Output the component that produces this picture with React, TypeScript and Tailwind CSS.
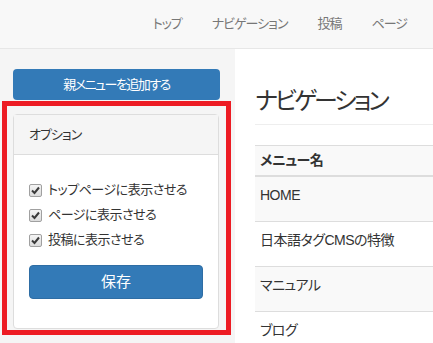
import React from 'react'

const navItems = ['トップ', 'ナビゲーション', '投稿', 'ページ']

const options = ['トップページに表示させる', 'ページに表示させる', '投稿に表示させる']

const menus = ['HOME', '日本語タグCMSの特徴', 'マニュアル', 'ブログ']

function Check() {
  return (
    <span className="flex h-[13px] w-[13px] shrink-0 items-center justify-center rounded-[2px] border border-[#a0a0a0] bg-gradient-to-b from-[#f4f4f4] to-[#dcdcdc]">
      <svg width="9" height="9" viewBox="0 0 9 9">
        <path d="M1 4.5 L3.5 7 L8 1.5" fill="none" stroke="#3a3a3a" strokeWidth="2" />
      </svg>
    </span>
  )
}

export default function App() {
  return (
    <div className="relative h-[343px] w-[433px] overflow-hidden bg-white font-['Liberation_Sans','Noto_Sans_CJK_JP',sans-serif] text-[#333] [font-feature-settings:'palt']">
      {/* top navbar */}
      <nav className="flex h-[49px] items-center justify-end border-b border-[#e7e7e7] bg-[#f8f8f8] pr-[11px] text-[13px] tracking-[-1px] text-[#777]">
        {navItems.map((item) => (
          <a key={item} className="px-[15px]">
            {item}
          </a>
        ))}
      </nav>

      <div className="flex h-[294px]">
        {/* sidebar */}
        <aside className="w-[235px] shrink-0 bg-[#f5f5f5] pl-[13px] pr-[15px] pt-[20px]">
          <button className="h-[31px] w-full rounded-[4px] bg-[#337ab7] text-[13px] tracking-[-1.5px] text-white">
            親メニューを追加する
          </button>

          <div className="mt-[14px] w-[206px] rounded-[4px] border border-[#ddd] bg-white">
            <div className="flex h-[40px] items-center border-b border-[#ddd] bg-[#f5f5f5] px-[15px] text-[13px] tracking-[-1px] text-[#333]">
              オプション
            </div>
            <div className="px-[15px] pb-[29px] pt-[27px]">
              <div className="flex flex-col gap-[9px]">
                {options.map((opt) => (
                  <label key={opt} className="flex h-[16px] items-center gap-[6px] whitespace-nowrap text-[13px] tracking-[-0.5px]">
                    <Check />
                    {opt}
                  </label>
                ))}
              </div>
              <button className="mt-[17px] h-[34px] w-full rounded-[4px] border border-[#2e6da4] bg-[#337ab7] text-[15px] text-white">
                保存
              </button>
            </div>
          </div>
        </aside>

        {/* main */}
        <main className="flex-1 pl-[20px]">
          <h1 className="mt-[34px] text-[24px] leading-[36px] tracking-[-3px] text-[#333]">ナビゲーション</h1>
          <div className="mt-[5px] border-t border-[#eee]" />
          <div className="mt-[20px] w-[200px] text-[14px]">
            <div className="flex h-[32px] items-center border-t border-b-2 border-[#ddd] bg-[#f9f9f9] px-[5px] font-bold tracking-[-0.5px]">
              メニュー名
            </div>
            {menus.map((m, i) => (
              <div
                key={m}
                className={`h-[45px] border-b border-[#ddd] px-[5px] pt-[8px] leading-[20px] tracking-[-0.5px] ${i % 2 === 0 ? 'bg-[#f9f9f9]' : 'bg-white'}`}
              >
                {m}
              </div>
            ))}
          </div>
        </main>
      </div>

      {/* red highlight annotation */}
      <div className="pointer-events-none absolute left-[2px] top-[101px] h-[234px] w-[229px] border-[5px] border-[#ed1c24]" />
    </div>
  )
}
